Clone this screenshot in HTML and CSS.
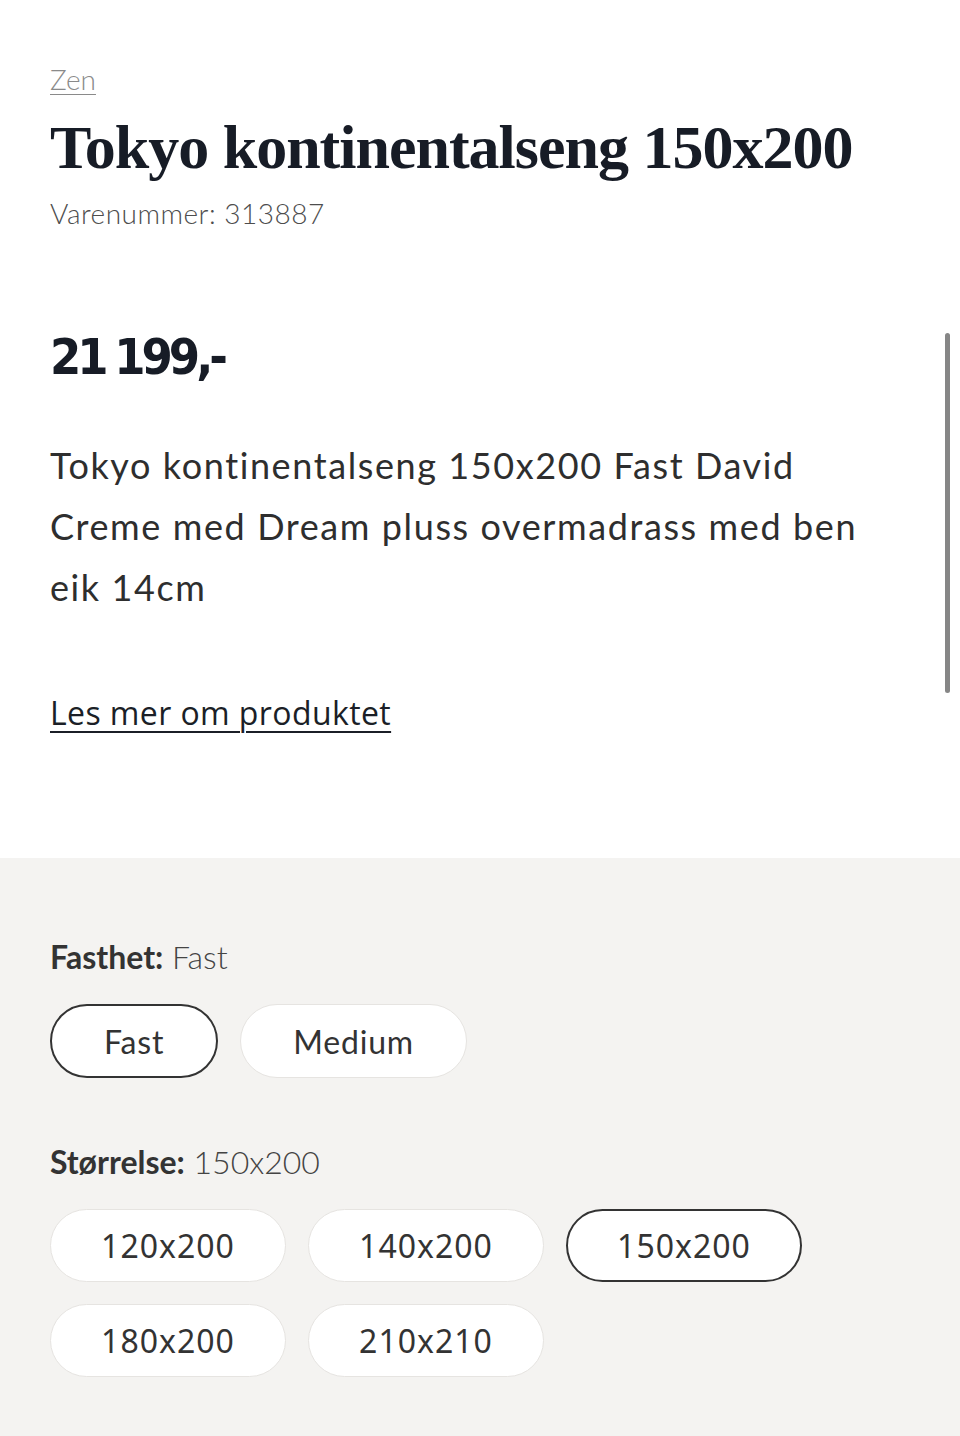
FILE: index.html
```html
<!DOCTYPE html>
<html lang="no">
<head>
    <meta charset="UTF-8">
    <meta name="viewport" content="width=device-width, initial-scale=1.0">
    <title>Tokyo kontinentalseng 150x200</title>
    <link rel="stylesheet" href="styles.css">
</head>
<body>
<div class="product">
    <div class="product-head">
        <a class="brand" href="#">Zen</a>
        <h1 class="title">Tokyo kontinentalseng 150x200</h1>
        <div class="sku">Varenummer: 313887</div>
    </div>

    <div class="price">21 199,-</div>

    <p class="description">Tokyo kontinentalseng 150x200 Fast David<br>Creme med Dream pluss overmadrass med ben<br>eik 14cm</p>

    <a class="read-more" href="#">Les mer om produktet</a>
</div>

<div class="variants">
    <div class="variant-group">
        <div class="variant-label"><strong>Fasthet:</strong> Fast</div>
        <div class="options">
            <button class="option firm selected">Fast</button>
            <button class="option firm">Medium</button>
        </div>
    </div>

    <div class="variant-group">
        <div class="variant-label"><strong>Størrelse:</strong> 150x200</div>
        <div class="options sizes">
            <button class="option size">120x200</button>
            <button class="option size">140x200</button>
            <button class="option size selected">150x200</button>
            <button class="option size">180x200</button>
            <button class="option size">210x210</button>
        </div>
    </div>
</div>

<div class="scrollbar"></div>
</body>
</html>
```

FILE: styles.css
```css
body {
    margin: 0;
    padding: 0;
    background-color: #ffffff;
    font-family: Lato, "Open Sans", sans-serif;
    color: #1b1f27;
}

.product {
    padding: 62px 50px 124px 50px;
}

.brand {
    font-size: 28px;
    font-weight: 300;
    color: #8a8a8a;
    text-decoration: underline;
    text-underline-offset: 4px;
    text-decoration-thickness: 1px;
}

.title {
    margin: 16px 0 0 0;
    font-family: "Liberation Serif", serif;
    font-weight: bold;
    font-size: 62px;
    line-height: 70px;
    letter-spacing: -1px;
    color: #171c26;
}

.sku {
    margin-top: 14px;
    font-size: 28px;
    font-weight: 300;
    letter-spacing: 0.5px;
    color: #4d4d4d;
}

.price {
    margin-top: 98px;
    font-family: "DejaVu Sans Condensed", "DejaVu Sans", sans-serif;
    font-weight: bold;
    font-size: 50px;
    letter-spacing: -4px;
    word-spacing: -2px;
    color: #171c26;
}

.description {
    margin: 49px 0 0 0;
    font-size: 36px;
    font-weight: 400;
    line-height: 61px;
    letter-spacing: 1.6px;
    color: #2e2e2e;
}

.read-more {
    display: inline-block;
    margin-top: 73px;
    font-family: "Open Sans", sans-serif;
    font-size: 32px;
    font-weight: 500;
    letter-spacing: 0.4px;
    color: #1b1f27;
    text-decoration: underline;
    text-underline-offset: 6px;
    text-decoration-thickness: 2px;
}

.variants {
    background-color: #f4f3f1;
    padding: 79px 50px 40px 50px;
}

.variant-group {
    margin-bottom: 64px;
}

.variant-label {
    font-size: 32px;
    font-weight: 300;
    color: #444;
    margin-bottom: 28px;
}

.variant-label strong {
    font-weight: 700;
    color: #333;
}

.options {
    display: flex;
    flex-wrap: wrap;
    gap: 22px;
}

.option {
    background-color: #ffffff;
    border: 1px solid #e6e4e1;
    border-radius: 40px;
    height: 74px;
    font-size: 32px;
    color: #333;
    cursor: pointer;
}

.option.selected {
    border: 2px solid #333;
}

.firm {
    font-family: Lato, sans-serif;
    padding: 0 52px;
    letter-spacing: 0.8px;
}

.sizes {
    width: 760px;
}

.size {
    width: 236px;
    height: 73px;
    font-family: "Noto Sans", "Open Sans", sans-serif;
    letter-spacing: 1px;
}

.scrollbar {
    position: fixed;
    top: 333px;
    right: 10px;
    width: 5px;
    height: 360px;
    border-radius: 3px;
    background-color: #868686;
}
```
